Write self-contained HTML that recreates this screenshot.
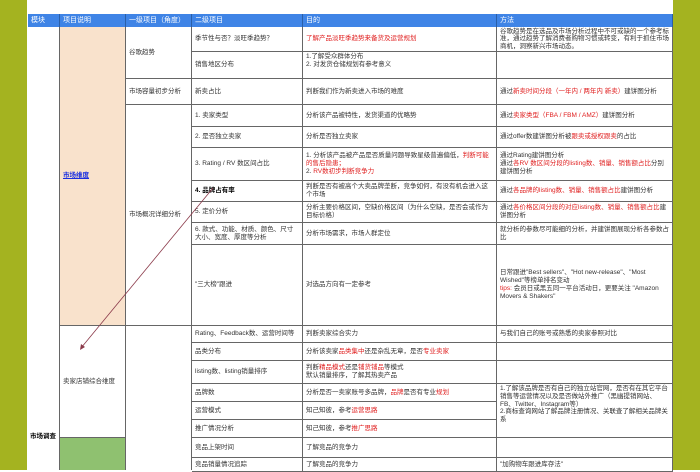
<!DOCTYPE html>
<html><head><meta charset="utf-8"><style>
body{margin:0;width:700px;height:470px;overflow:hidden;background:#fff;font-family:"Liberation Sans","Noto Sans CJK SC",sans-serif;position:relative}
.bar{position:absolute;top:0;height:470px;background:#a4b320}
.c{position:absolute;box-sizing:border-box;border-right:1px solid #666;border-bottom:1px solid #666;font-size:6.5px;line-height:7.8px;color:#333;padding:0 3px;display:flex;align-items:center;overflow:hidden}
.h{background:#3f84e6;color:#fff;font-size:7px;border-bottom:none;border-right:1px solid #2a5fa8}
.r{color:#e02020}
</style></head><body>
<div class="bar" style="left:0;width:27px"></div>
<div class="bar" style="left:673px;width:27px"></div>

<div class="c h" style="left:28px;top:14px;width:32px;height:13px">模块</div>
<div class="c h" style="left:60px;top:14px;width:66px;height:13px">项目说明</div>
<div class="c h" style="left:126px;top:14px;width:66px;height:13px">一级项目（角度）</div>
<div class="c h" style="left:192px;top:14px;width:111px;height:13px">二级项目</div>
<div class="c h" style="left:303px;top:14px;width:194px;height:13px">目的</div>
<div class="c h" style="left:497px;top:14px;width:176px;height:13px">方法</div>

<div class="c" style="left:28px;top:27px;width:32px;height:443px;border-bottom:none;font-weight:bold;color:#000;align-items:flex-start;padding:406px 0 0 2px;white-space:nowrap;font-size:6.5px">市场调查</div>
<div class="c" style="left:60px;top:27px;width:66px;height:299px;background:#f9e2cc"><span style="color:#1a2ee0;text-decoration:underline;font-weight:bold">市场维度</span></div>
<div class="c" style="left:60px;top:326px;width:66px;height:112px">卖家店铺综合维度</div>
<div class="c" style="left:60px;top:438px;width:66px;height:32px;background:#8fc170;border-bottom:none"></div>

<div class="c" style="left:126px;top:27px;width:66px;height:52px">谷歌趋势</div>
<div class="c" style="left:126px;top:79px;width:66px;height:26px">市场容量初步分析</div>
<div class="c" style="left:126px;top:105px;width:66px;height:221px">市场概况详细分析</div>
<div class="c" style="left:126px;top:326px;width:66px;height:144px;border-bottom:none"></div>

<div class="c" style="left:192px;top:27px;width:111px;height:25px">季节性与否？淡旺季趋势？</div>
<div class="c" style="left:192px;top:52px;width:111px;height:27px">销售地区分布</div>
<div class="c" style="left:192px;top:79px;width:111px;height:26px">新卖占比</div>
<div class="c" style="left:192px;top:105px;width:111px;height:22px">1. 卖家类型</div>
<div class="c" style="left:192px;top:127px;width:111px;height:21px">2. 是否独立卖家</div>
<div class="c" style="left:192px;top:148px;width:111px;height:33px">3. Rating / RV 数区间占比</div>
<div class="c" style="left:192px;top:181px;width:111px;height:21px;font-weight:bold;color:#000">4. 品牌占有率</div>
<div class="c" style="left:192px;top:202px;width:111px;height:21px">5. 定价分析</div>
<div class="c" style="left:192px;top:223px;width:111px;height:22px">6. 款式、功能、材质、颜色、尺寸大小、宽度、厚度等分析</div>
<div class="c" style="left:192px;top:245px;width:111px;height:81px">"三大榜"跟进</div>
<div class="c" style="left:192px;top:326px;width:111px;height:17px">Rating、Feedback数、运营时间等</div>
<div class="c" style="left:192px;top:343px;width:111px;height:18px">品类分布</div>
<div class="c" style="left:192px;top:361px;width:111px;height:23px">listing数、listing销量排序</div>
<div class="c" style="left:192px;top:384px;width:111px;height:18px">品牌数</div>
<div class="c" style="left:192px;top:402px;width:111px;height:18px">运营模式</div>
<div class="c" style="left:192px;top:420px;width:111px;height:18px">推广情况分析</div>
<div class="c" style="left:192px;top:438px;width:111px;height:20px">竞品上架时间</div>
<div class="c" style="left:192px;top:458px;width:111px;height:14px">竞品销量情况追踪</div>

<div class="c r" style="left:303px;top:27px;width:194px;height:25px">了解产品淡旺季趋势来备货及运营规划</div>
<div class="c" style="left:303px;top:52px;width:194px;height:27px;align-items:flex-start;padding-top:1px">1.了解受众群体分布<br>2. 对发货仓储规划有参考意义</div>
<div class="c" style="left:303px;top:79px;width:194px;height:26px">判断我们作为新卖进入市场的难度</div>
<div class="c" style="left:303px;top:105px;width:194px;height:22px">分析该产品被特性，发货渠道的优略势</div>
<div class="c" style="left:303px;top:127px;width:194px;height:21px">分析是否独立卖家</div>
<div class="c" style="left:303px;top:148px;width:194px;height:33px"><div>1. 分析该产品被产品是否质量问题导致星级普遍偏低，<span class="r">判断可能的售后隐患；</span><br>2. <span class="r">RV数初步判断竞争力</span></div></div>
<div class="c" style="left:303px;top:181px;width:194px;height:21px">判断是否有被高个大卖品牌垄断，竞争如何，有没有机会进入这个市场</div>
<div class="c" style="left:303px;top:202px;width:194px;height:21px">分析主要价格区间，空缺价格区间（为什么空缺，是否会或作为目标价格）</div>
<div class="c" style="left:303px;top:223px;width:194px;height:22px">分析市场需求，市场人群定位</div>
<div class="c" style="left:303px;top:245px;width:194px;height:81px">对选品方向有一定参考</div>
<div class="c" style="left:303px;top:326px;width:194px;height:17px">判断卖家综合实力</div>
<div class="c" style="left:303px;top:343px;width:194px;height:18px"><div>分析该卖家<span class="r">品类集中</span>还是杂乱无章，是否<span class="r">专业卖家</span></div></div>
<div class="c" style="left:303px;top:361px;width:194px;height:23px"><div>判断<span class="r">精品模式</span>还是<span class="r">铺货铺品</span>等模式<br>默认销量排序，了解其热卖产品</div></div>
<div class="c" style="left:303px;top:384px;width:194px;height:18px"><div>分析是否一卖家账号多品牌，<span class="r">品牌</span>是否有专业<span class="r">规划</span></div></div>
<div class="c" style="left:303px;top:402px;width:194px;height:18px"><div>知己知彼，参考<span class="r">运营思路</span></div></div>
<div class="c" style="left:303px;top:420px;width:194px;height:18px"><div>知己知彼，参考<span class="r">推广思路</span></div></div>
<div class="c" style="left:303px;top:438px;width:194px;height:20px">了解竞品的竞争力</div>
<div class="c" style="left:303px;top:458px;width:194px;height:14px">了解竞品的竞争力</div>

<div class="c" style="left:497px;top:27px;width:176px;height:25px;line-height:7.4px">谷歌趋势是在选品及市场分析过程中不可或缺的一个参考标准，通过趋势了解消费者购物习惯或转变，有利于抓住市场商机，洞察新兴市场动态。</div>
<div class="c" style="left:497px;top:52px;width:176px;height:27px"></div>
<div class="c" style="left:497px;top:79px;width:176px;height:26px"><div>通过<span class="r">新卖时间分段（一年内 / 两年内 新卖）</span>建饼图分析</div></div>
<div class="c" style="left:497px;top:105px;width:176px;height:22px"><div>通过<span class="r">卖家类型（FBA / FBM / AMZ）</span>建饼图分析</div></div>
<div class="c" style="left:497px;top:127px;width:176px;height:21px"><div>通过offer数建饼图分析被<span class="r">跟卖或授权跟卖</span>的占比</div></div>
<div class="c" style="left:497px;top:148px;width:176px;height:33px"><div>通过Rating建饼图分析<br>通过<span class="r">各RV 数区间分段的listing数、销量、销售额占比</span>分别建饼图分析</div></div>
<div class="c" style="left:497px;top:181px;width:176px;height:21px"><div>通过<span class="r">各品牌的listing数、销量、销售额占比</span>建饼图分析</div></div>
<div class="c" style="left:497px;top:202px;width:176px;height:21px"><div>通过<span class="r">各价格区间分段的对应listing数、销量、销售额占比</span>建饼图分析</div></div>
<div class="c" style="left:497px;top:223px;width:176px;height:22px">就分析的参数尽可能细的分析，并建饼图展现分析各参数占比</div>
<div class="c" style="left:497px;top:245px;width:176px;height:81px"><div>日常跟进"Best sellers"、"Hot new-release"、"Most Wished"等榜单排名变动<br><span class="r">tips:</span> 会员日或黑五同一平台活动日，更要关注 "Amazon Movers &amp; Shakers"</div></div>
<div class="c" style="left:497px;top:326px;width:176px;height:17px">与我们自己的账号或熟悉的卖家参照对比</div>
<div class="c" style="left:497px;top:343px;width:176px;height:18px"></div>
<div class="c" style="left:497px;top:361px;width:176px;height:23px"></div>
<div class="c" style="left:497px;top:384px;width:176px;height:54px;align-items:flex-start;padding-top:1px">1.了解该品牌是否有自己的独立站官网，是否有在其它平台销售等运营情况以及是否做站外推广（黑幽提销网站、FB、Twitter、Instagram等）<br>2.商标查询网站了解品牌注册情况、关联查了解相关品牌关系</div>
<div class="c" style="left:497px;top:438px;width:176px;height:20px"></div>
<div class="c" style="left:497px;top:458px;width:176px;height:14px">"加购物车跟进库存法"</div>

<svg style="position:absolute;left:0;top:0" width="700" height="470"><line x1="213" y1="188" x2="81" y2="348" stroke="#8b3a4a" stroke-width="0.8"/><path d="M80 350 L81 344 L85 347 Z" fill="#8b3a4a"/></svg>
</body></html>
